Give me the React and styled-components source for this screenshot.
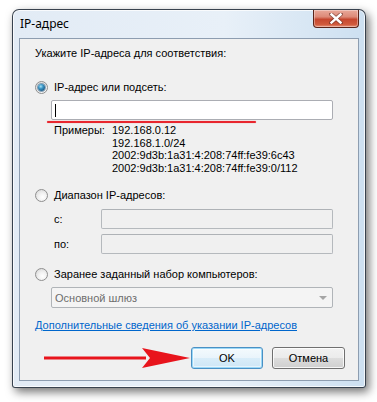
import React from "react";
import styled, { createGlobalStyle } from "styled-components";

const Global = createGlobalStyle`
  html, body { margin: 0; padding: 0; background: #ffffff; }
  body { width: 377px; height: 402px; overflow: hidden; font-family: "Liberation Sans", Arial, sans-serif; }
  * { box-sizing: border-box; }
`;

const Desktop = styled.div`
  padding: 9px 0 0 12px;
`;

const Window = styled.div`
  width: 354px;
  height: 379px;
  display: flex;
  flex-direction: column;
  border: 1px solid rgba(38, 48, 60, 0.9);
  border-radius: 7px 7px 3px 3px;
  background: linear-gradient(to right, #e2ebf5 0%, #e8f0f8 60%, #cde0f1 100%);
  box-shadow: 3px 4px 10px rgba(0, 0, 0, 0.55), inset 0 0 0 1px rgba(255, 255, 255, 0.75);
`;

const TitleBar = styled.div`
  height: 28px;
  display: flex;
  justify-content: space-between;
  align-items: flex-start;
  padding-left: 7px;
`;

const Title = styled.div`
  font-family: "Noto Sans", "Open Sans", sans-serif;
  font-size: 12px;
  line-height: 16px;
  margin-top: 6px;
  color: #000;
`;

const CloseButton = styled.div`
  width: 46px;
  height: 18px;
  margin-right: 6px;
  border: 1px solid #5a2419;
  border-top: none;
  border-radius: 0 0 4px 4px;
  background: linear-gradient(to bottom, #e9a99a 0%, #dd8a78 40%, #c6472f 55%, #d05a3c 85%, #e9937a 100%);
  box-shadow: inset 0 0 0 1px rgba(255, 255, 255, 0.35);
  display: flex;
  align-items: center;
  justify-content: center;
`;

const Client = styled.div`
  flex: 1;
  margin: 0 6px 6px 6px;
  border: 1px solid #8d9db0;
  background: #f0f0f0;
  position: relative;
  padding: 8px 25px 0 15px;
  display: flex;
  flex-direction: column;
  font-size: 11px;
  color: #000;
`;

const Heading = styled.div`
  line-height: 13px;
`;

const RadioRow = styled.div`
  display: flex;
  align-items: center;
  height: 14px;
  margin-top: ${(p) => p.$mt}px;
  gap: 6px;
`;

const Radio = styled.span`
  width: 13px;
  height: 13px;
  border-radius: 50%;
  border: 1px solid #8f8f8f;
  background: radial-gradient(circle at 60% 65%, #ffffff 0%, #f2f2f2 40%, #d2d2d2 100%);
  display: flex;
  align-items: center;
  justify-content: center;
  flex-shrink: 0;
  &::after {
    content: "";
    display: ${(p) => (p.$checked ? "block" : "none")};
    width: 7px;
    height: 7px;
    border-radius: 50%;
    background: radial-gradient(circle at 40% 35%, #a9e3f6 0%, #3d97c6 35%, #1c5a86 75%, #13405f 100%);
    box-shadow: 0 0 0 1px rgba(30, 80, 120, 0.5);
  }
`;

const Label = styled.span`
  line-height: 13px;
  white-space: nowrap;
`;

const FieldWrap = styled.div`
  position: relative;
  margin-top: ${(p) => p.$mt}px;
  margin-left: 16px;
`;

const TextBox = styled.div`
  height: 20px;
  background: ${(p) => (p.$disabled ? "#f0f0f0" : "#ffffff")};
  border: 1px solid ${(p) => (p.$disabled ? "#b5b9bd" : "#abadb3")};
  border-top-color: ${(p) => (p.$disabled ? "#aeb2b6" : "#abadb3")};
  border-radius: 2px;
  flex: 1;
  display: flex;
  align-items: center;
  padding-left: 3px;
`;

const Caret = styled.span`
  width: 1px;
  height: 13px;
  background: #000;
`;

const Underline = styled.div`
  position: absolute;
  left: -4px;
  bottom: -3px;
  width: 209px;
  height: 2px;
  border-radius: 1px;
  background: #e8262e;
  box-shadow: 0 0 1px rgba(232, 38, 46, 0.6);
`;

const Examples = styled.div`
  margin-top: 4px;
  margin-left: 19px;
  display: grid;
  grid-template-columns: 58px auto;
  line-height: 12.5px;
`;

const Values = styled.div`
  display: flex;
  flex-direction: column;
`;

const RangeRow = styled.div`
  display: grid;
  grid-template-columns: 47px 1fr;
  align-items: center;
  margin-left: 19px;
  margin-top: ${(p) => p.$mt}px;
`;

const Select = styled.div`
  height: 21px;
  margin-top: 6px;
  margin-left: 16px;
  border: 1px solid #b0b4b8;
  border-radius: 2px;
  background: #f4f4f4;
  display: flex;
  align-items: center;
  justify-content: space-between;
  padding: 0 5px 0 3px;
  color: #6d6d6d;
`;

const Arrow = styled.span`
  width: 0;
  height: 0;
  border-left: 4px solid transparent;
  border-right: 4px solid transparent;
  border-top: 4px solid #a5a5a5;
`;

const Link = styled.a`
  margin-top: 11px;
  line-height: 13px;
  color: #0066cc;
  text-decoration: underline;
  cursor: pointer;
  white-space: nowrap;
`;

const ButtonRow = styled.div`
  position: relative;
  display: flex;
  justify-content: flex-end;
  gap: 9px;
  margin-top: 15px;
  margin-right: -12px;
`;

const Button = styled.button`
  width: ${(p) => (p.$default ? 72 : 73)}px;
  height: 22px;
  font-family: "Liberation Sans", Arial, sans-serif;
  font-size: 11px;
  color: #000;
  padding: 0;
  border-radius: 3px;
  border: 1px solid ${(p) => (p.$default ? "#4a90c4" : "#707070")};
  background: ${(p) =>
    p.$default
      ? "linear-gradient(to bottom, #f4fafd 0%, #e9f4fb 50%, #d9edf9 51%, #cde6f6 100%)"
      : "linear-gradient(to bottom, #f2f2f2 0%, #ebebeb 50%, #dddddd 51%, #cfcfcf 100%)"};
  box-shadow: ${(p) =>
    p.$default
      ? "inset 0 0 0 1px #9bd8f7, inset 0 0 0 2px rgba(255,255,255,0.5)"
      : "inset 0 0 0 1px rgba(255,255,255,0.8)"};
`;

const RedArrow = styled.svg`
  position: absolute;
  left: 9px;
  top: 0;
`;

export default function App() {
  return (
    <>
      <Global />
      <Desktop>
        <Window>
          <TitleBar>
            <Title>IP-адрес</Title>
            <CloseButton>
              <svg width="14" height="11" viewBox="0 0 14 11">
                <path
                  d="M2 1 L12 10 M12 1 L2 10"
                  stroke="#5a2a22"
                  strokeWidth="4"
                  strokeLinecap="square"
                  opacity="0.55"
                />
                <path
                  d="M2.5 1.5 L11.5 9.5 M11.5 1.5 L2.5 9.5"
                  stroke="#ffffff"
                  strokeWidth="2.4"
                  strokeLinecap="square"
                />
              </svg>
            </CloseButton>
          </TitleBar>
          <Client>
            <Heading>Укажите IP-адреса для соответствия:</Heading>

            <RadioRow $mt={20}>
              <Radio $checked />
              <Label>IP-адрес или подсеть:</Label>
            </RadioRow>
            <FieldWrap $mt={6}>
              <TextBox>
                <Caret />
              </TextBox>
              <Underline />
            </FieldWrap>
            <Examples>
              <span>Примеры:</span>
              <Values>
                <span>192.168.0.12</span>
                <span>192.168.1.0/24</span>
                <span>2002:9d3b:1a31:4:208:74ff:fe39:6c43</span>
                <span>2002:9d3b:1a31:4:208:74ff:fe39:0/112</span>
              </Values>
            </Examples>

            <RadioRow $mt={14}>
              <Radio />
              <Label>Диапазон IP-адресов:</Label>
            </RadioRow>
            <RangeRow $mt={7}>
              <span>с:</span>
              <TextBox $disabled />
            </RangeRow>
            <RangeRow $mt={5}>
              <span>по:</span>
              <TextBox $disabled />
            </RangeRow>

            <RadioRow $mt={13}>
              <Radio />
              <Label>Заранее заданный набор компьютеров:</Label>
            </RadioRow>
            <Select>
              <span>Основной шлюз</span>
              <Arrow />
            </Select>

            <Link>Дополнительные сведения об указании IP-адресов</Link>

            <ButtonRow>
              <RedArrow width="146" height="22" viewBox="0 0 146 22">
                <rect x="0" y="9.5" width="102" height="3" fill="#e8141c" />
                <path d="M98 1 L146 11 L98 21 L106 11 Z" fill="#e8141c" />
              </RedArrow>
              <Button $default>OK</Button>
              <Button>Отмена</Button>
            </ButtonRow>
          </Client>
        </Window>
      </Desktop>
    </>
  );
}
